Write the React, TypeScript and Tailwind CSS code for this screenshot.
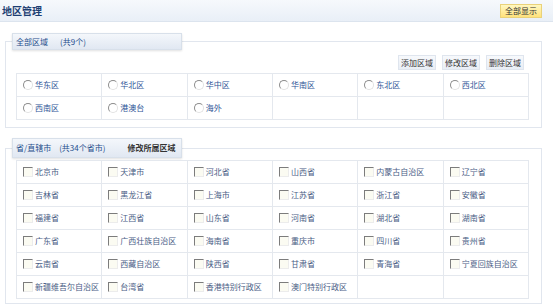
const regions = [
  ['华东区', '华北区', '华中区', '华南区', '东北区', '西北区'],
  ['西南区', '港澳台', '海外', '', '', ''],
]

const provinces = [
  '北京市', '天津市', '河北省', '山西省', '内蒙古自治区', '辽宁省',
  '吉林省', '黑龙江省', '上海市', '江苏省', '浙江省', '安徽省',
  '福建省', '江西省', '山东省', '河南省', '湖北省', '湖南省',
  '广东省', '广西壮族自治区', '海南省', '重庆市', '四川省', '贵州省',
  '云南省', '西藏自治区', '陕西省', '甘肃省', '青海省', '宁夏回族自治区',
  '新疆维吾尔自治区', '台湾省', '香港特别行政区', '澳门特别行政区', '', '',
]

const rows: string[][] = []
for (let i = 0; i < provinces.length; i += 6) rows.push(provinces.slice(i, i + 6))

function Radio() {
  return (
    <span className="inline-block w-[10px] h-[10px] shrink-0 rounded-full border border-t-[#8c8c8c] border-l-[#8c8c8c] border-r-[#e2e2e2] border-b-[#e2e2e2] bg-white" />
  )
}

function Check() {
  return (
    <span className="inline-block w-[10px] h-[10px] shrink-0 border border-t-[#7c7c7c] border-l-[#7c7c7c] border-r-[#ececec] border-b-[#ececec] bg-[#fbfbf2]" />
  )
}

function Grid({ data, radio }: { data: string[][]; radio?: boolean }) {
  return (
    <table className="ml-[10px] w-[513px] table-fixed border-collapse">
      <tbody>
        {data.map((row, r) => (
          <tr key={r}>
            {row.map((name, c) => (
              <td key={c} className="h-[23px] border border-[#e4e8ee] p-0 pl-[6px]">
                {name && (
                  <div className="flex items-center gap-[2px]">
                    {radio ? <Radio /> : <Check />}
                    <span className={radio ? 'text-[#2f5597]' : 'text-[#4a5d85]'}>{name}</span>
                  </div>
                )}
              </td>
            ))}
          </tr>
        ))}
      </tbody>
    </table>
  )
}

export default function App() {
  return (
    <div className="w-[553px] h-[304px] overflow-hidden bg-white text-[8px] leading-none font-['Noto_Sans_CJK_SC','Liberation_Sans',sans-serif]">
      {/* 标题栏 */}
      <div className="h-[22px] flex items-center justify-between pl-[2px] pr-[11px] bg-gradient-to-b from-[#f6f9fc] to-[#e9eff7] border-b border-[#dce4ee]">
        <span className="text-[10px] font-bold text-[#1d3e72]">地区管理</span>
        <button className="h-[14px] px-[4px] flex items-center bg-gradient-to-b from-[#fff7c0] to-[#ffe27a] border border-[#e9d27a] text-[#333] text-[8px]">
          全部显示
        </button>
      </div>

      {/* 全部区域 */}
      <fieldset className="ml-[5px] mt-[11px] w-[537px] border border-[#e1e6ee] pb-[7px]">
        <legend className="ml-[6px] w-[170px] h-[17px] flex items-center pl-[3px] bg-gradient-to-b from-[#f4f7fb] to-[#e1e8f2] border border-[#d8e0ea] shadow-[0_1px_2px_rgba(0,0,0,0.12)] text-[#1f4e8c]">
          全部区域<span className="ml-[12px]">(共9个)</span>
        </legend>
        <div className="mt-[5px] flex justify-end gap-[6px] pr-[17px]">
          {['添加区域', '修改区域', '删除区域'].map(b => (
            <button key={b} className="h-[15px] px-[2px] flex items-center bg-gradient-to-b from-[#f7f9fc] to-[#e9eef5] border border-[#dfe5ee] text-[#333] text-[8px]">
              {b}
            </button>
          ))}
        </div>
        <div className="mt-[3px]">
          <Grid data={regions} radio />
        </div>
      </fieldset>

      {/* 省/直辖市 */}
      <fieldset className="ml-[5px] mt-[10px] w-[537px] border border-[#e1e6ee] pb-[4px]">
        <legend className="ml-[6px] w-[170px] h-[20px] flex items-center pl-[3px] bg-gradient-to-b from-[#f4f7fb] to-[#e1e8f2] border border-[#d8e0ea] shadow-[0_1px_2px_rgba(0,0,0,0.12)]">
          <span className="text-[#1f4e8c]">省/直辖市</span>
          <span className="ml-[8px] text-[#1f4e8c]">(共34个省市)</span>
          <span className="ml-[22px] text-[#333] font-bold">修改所属区域</span>
        </legend>
        <div className="mt-[2px]">
          <Grid data={rows} />
        </div>
      </fieldset>
    </div>
  )
}
